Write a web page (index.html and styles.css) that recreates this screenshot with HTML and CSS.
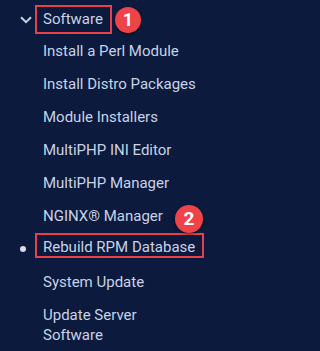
FILE: index.html
```html
<!DOCTYPE html>
<html lang="en">
<head>
<meta charset="utf-8">
<title>Software menu</title>
<link rel="stylesheet" href="styles.css">
</head>
<body>
<nav class="menu">
  <div class="group-head">
    <svg class="chevron" width="12" height="8" viewBox="0 0 12 8" aria-hidden="true">
      <path d="M1 1.2 L6 6.2 L11 1.2" fill="none" stroke="#c7d0e4" stroke-width="2"/>
    </svg>
    <span class="hl">Software</span>
    <span class="badge">1</span>
  </div>
  <ul class="items">
    <li class="item">Install a Perl Module</li>
    <li class="item">Install Distro Packages</li>
    <li class="item">Module Installers</li>
    <li class="item">MultiPHP INI Editor</li>
    <li class="item">MultiPHP Manager</li>
    <li class="item">NGINX® Manager</li>
    <li class="item current">
      <span class="dot"></span>
      <span class="hl hl-current">Rebuild RPM Database</span>
      <span class="badge badge-2">2</span>
    </li>
    <li class="item">System Update</li>
    <li class="item">Update Server Software</li>
  </ul>
</nav>
</body>
</html>
```
FILE: styles.css
```css
html, body {
  margin: 0;
  padding: 0;
  background: #0b1a3d;
}
body {
  font-family: Roboto, "Liberation Sans", sans-serif;
  font-size: 15px;
  color: #c9d2e6;
  width: 222px;
  height: 351px;
  overflow: hidden;
}
.menu {
  width: 222px;
}
.group-head {
  display: flex;
  align-items: center;
  padding: 5px 0 0 20px;
  height: 29px;
}
.chevron {
  display: block;
  margin-right: 3px;
}
.hl {
  display: inline-block;
  border: 2px solid #e8414a;
  padding: 0 7px 0 6px;
  line-height: 25px;
  color: #c9d2e6;
}
.badge {
  display: flex;
  align-items: center;
  justify-content: center;
  width: 26px;
  height: 26px;
  border-radius: 50%;
  background: #ee4348;
  color: #ffffff;
  font-weight: 700;
  font-size: 18px;
  box-shadow: 0 1px 3px rgba(0, 0, 0, 0.55);
  margin-left: 3px;
}
.items {
  list-style: none;
  margin: 0;
  padding: 0;
  width: 210px;
}
.item {
  padding: 6.5px 0 6.5px 43px;
  line-height: 20px;
  max-width: 157px;
}
.current {
  position: relative;
  display: flex;
  align-items: center;
  height: 33px;
  box-sizing: border-box;
  padding: 0 0 0 20px;
  max-width: none;
}
.dot {
  width: 6px;
  height: 6px;
  border-radius: 50%;
  background: #d9dde8;
  margin-right: 9px;
  flex: none;
}
.hl-current {
  white-space: nowrap;
  line-height: 18px;
  padding: 3px 7px 0 6px;
  margin-bottom: 6px;
}
.badge-2 {
  position: absolute;
  left: 175px;
  top: -27px;
  width: 28px;
  height: 28px;
  margin: 0;
  font-size: 19px;
}
```
